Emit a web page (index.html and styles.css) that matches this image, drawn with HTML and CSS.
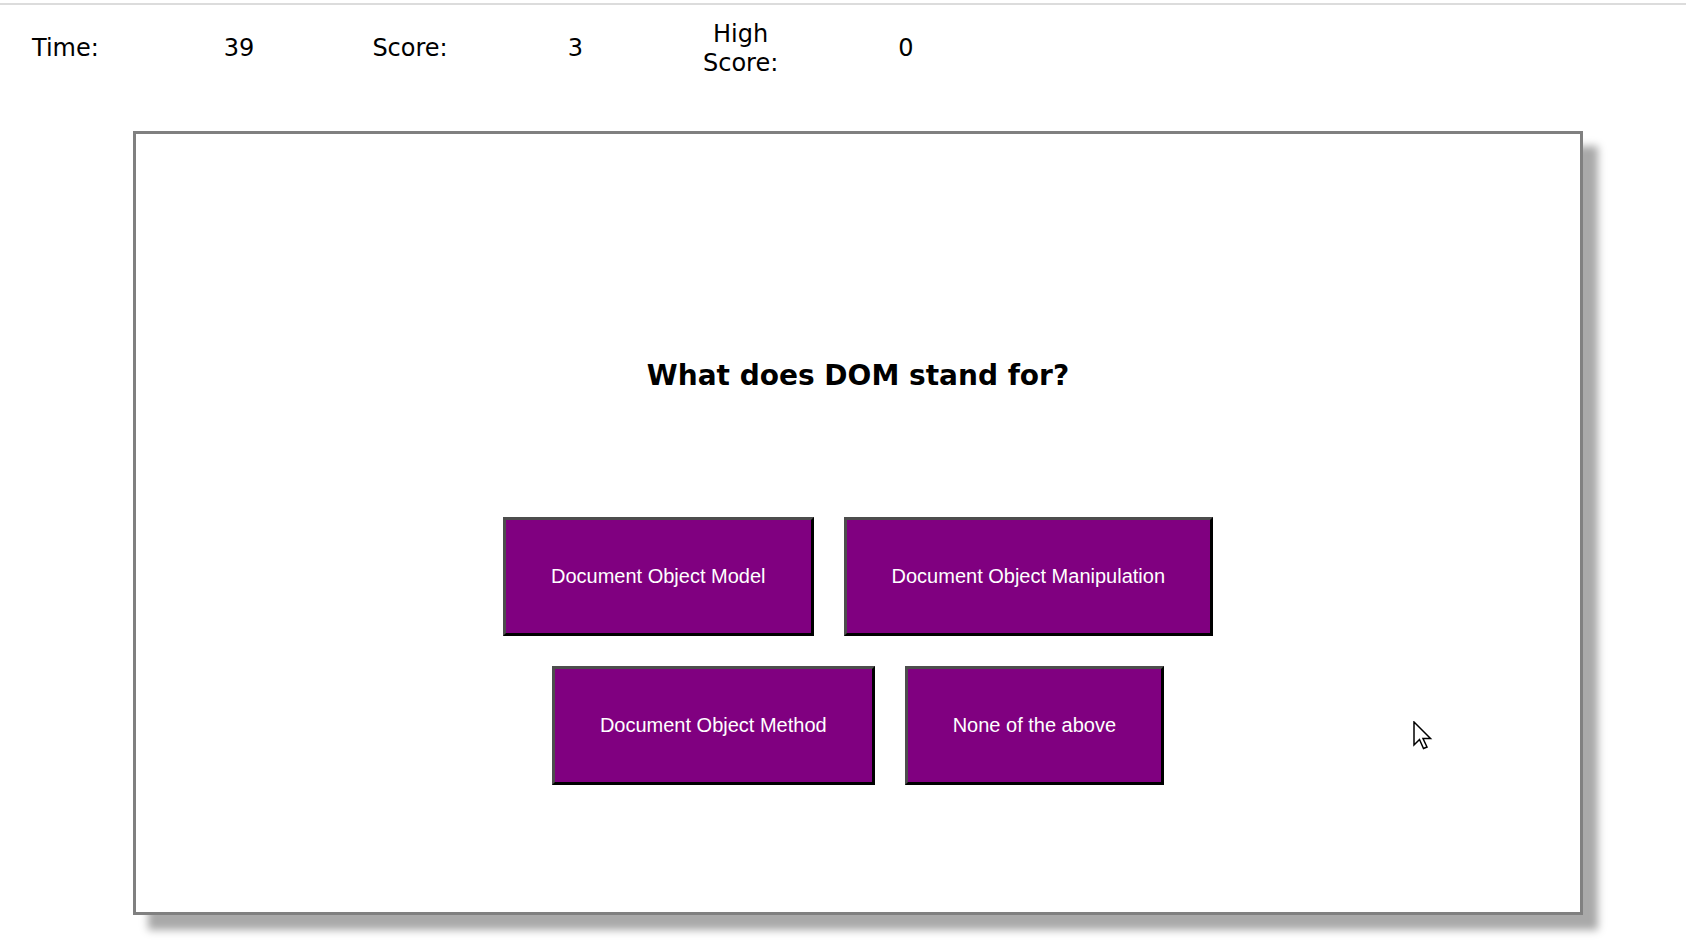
FILE: index.html
```html
<!DOCTYPE html>
<html lang="en">
<head>
<meta charset="utf-8">
<title>Quiz</title>
<link rel="stylesheet" href="styles.css">
</head>
<body>
<div class="topline"></div>
<header class="stats">
  <span class="stat stat-first">Time:</span>
  <span class="stat stat-second">39</span>
  <span class="stat">Score:</span>
  <span class="stat">3</span>
  <span class="stat stat-wrap">High Score:</span>
  <span class="stat">0</span>
</header>
<main class="card">
  <h3 class="question">What does DOM stand for?</h3>
  <div class="answers">
    <button class="answer">Document Object Model</button>
    <button class="answer">Document Object Manipulation</button>
    <button class="answer">Document Object Method</button>
    <button class="answer">None of the above</button>
  </div>
</main>
<svg class="cursor" width="22" height="30" viewBox="0 0 22 30" xmlns="http://www.w3.org/2000/svg">
  <path d="M1 1 L1 24 L6.5 18.5 L10.5 27.5 L14 26 L10 17.5 L17.5 17.5 Z" fill="#fff" stroke="#000" stroke-width="1.5" stroke-linejoin="miter"/>
</svg>
</body>
</html>
```

FILE: styles.css
```css
html, body {
  margin: 0;
  padding: 0;
  background: #ffffff;
}

body {
  font-family: "DejaVu Sans", Verdana, sans-serif;
  color: #000;
  position: relative;
  min-height: 949px;
}

.topline {
  margin-top: 3px;
  height: 2px;
  background: #dcdcdc;
}

.stats {
  display: flex;
  align-items: center;
  gap: 120px;
  height: 87px;
  padding-left: 32px;
  font-size: 24px;
  line-height: 29px;
}

.stat-first {
  margin-right: 5px;
}

.stat-second {
  margin-right: -2px;
}

.stat-wrap {
  width: min-content;
  text-align: center;
}

.card {
  box-sizing: border-box;
  margin: 39px 0 0 133px;
  width: 1450px;
  height: 784px;
  border: 3px solid #808080;
  box-shadow: 15px 15px 8px #a9a9a9;
  background: #fff;
  display: flex;
  flex-direction: column;
  align-items: center;
  padding-top: 225px;
}

.question {
  margin: 0;
  font-size: 28px;
  line-height: 33px;
  font-weight: bold;
  text-align: center;
}

.answers {
  margin-top: 125px;
  width: 800px;
  display: flex;
  flex-wrap: wrap;
  justify-content: center;
  gap: 30px;
}

.answer {
  font-family: "Liberation Sans", Arial, sans-serif;
  font-size: 20px;
  line-height: 23px;
  color: #fff;
  background: #800080;
  padding: 45px;
  margin: 0;
  border-style: solid;
  border-width: 3px;
  border-color: #4d4d4d #000 #000 #4d4d4d;
  cursor: pointer;
}

.cursor {
  position: absolute;
  left: 1413px;
  top: 721px;
}
```
